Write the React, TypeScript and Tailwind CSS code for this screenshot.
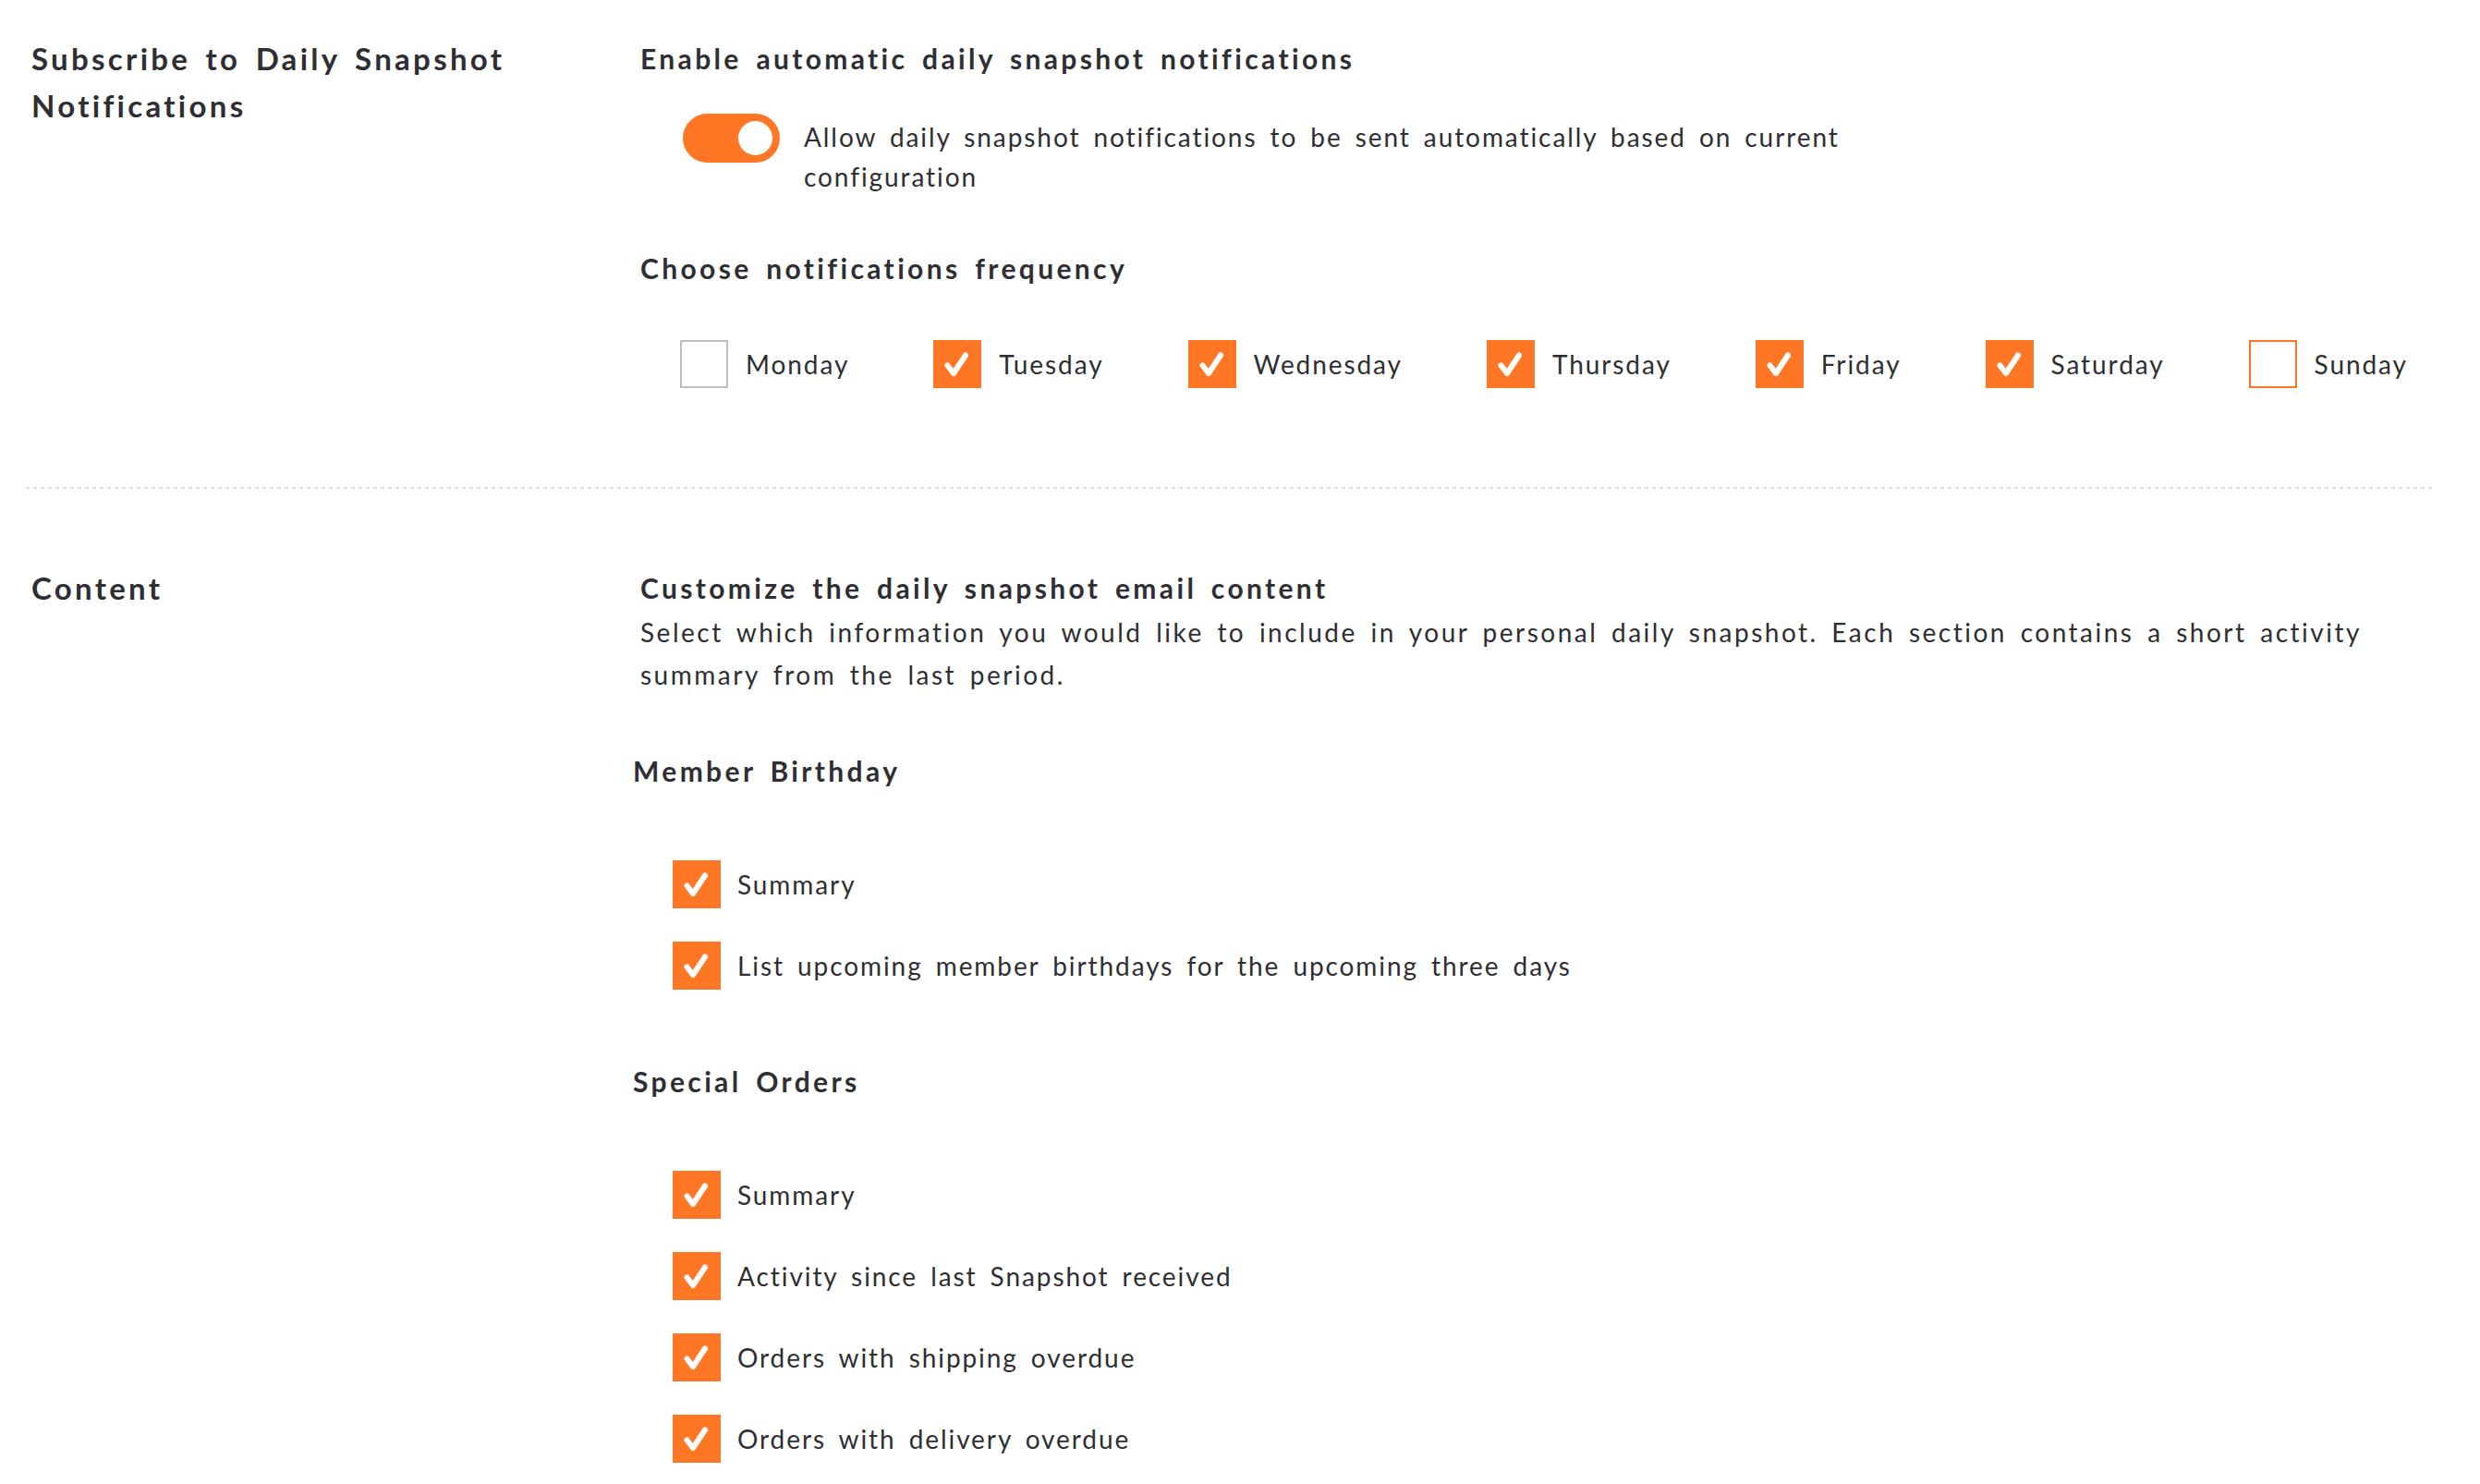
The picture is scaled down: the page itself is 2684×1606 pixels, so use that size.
import React, { useState } from 'react';

const days = [
  { name: 'Monday', checked: false },
  { name: 'Tuesday', checked: true },
  { name: 'Wednesday', checked: true },
  { name: 'Thursday', checked: true },
  { name: 'Friday', checked: true },
  { name: 'Saturday', checked: true },
  { name: 'Sunday', checked: false, focused: true },
];

const groups = [
  {
    title: 'Member Birthday',
    items: ['Summary', 'List upcoming member birthdays for the upcoming three days'],
  },
  {
    title: 'Special Orders',
    items: [
      'Summary',
      'Activity since last Snapshot received',
      'Orders with shipping overdue',
      'Orders with delivery overdue',
    ],
  },
];

const Check: React.FC = () => (
  <svg viewBox="0 0 52 52" className="w-[52px] h-[52px]">
    <path d="M15.5 27.5 L22 36 L35 16.5" fill="none" stroke="#fff" strokeWidth="6" strokeLinecap="round" strokeLinejoin="round" />
  </svg>
);

const Checkbox: React.FC<{ checked: boolean; focused?: boolean }> = ({ checked, focused }) => {
  if (checked) {
    return (
      <span className="w-[52px] h-[52px] shrink-0 bg-[#ff7725] flex items-center justify-center">
        <Check />
      </span>
    );
  }
  return (
    <span
      className={
        focused
          ? 'w-[52px] h-[52px] shrink-0 bg-white border-2 border-[#ff7725]'
          : 'w-[52px] h-[52px] shrink-0 bg-white border-2 border-[#bdbdbd]'
      }
    />
  );
};

const App: React.FC = () => {
  const [enabled, setEnabled] = useState(true);

  return (
    <div className="min-h-screen bg-white text-[#2e2e33] font-['Lato',sans-serif] tracking-[1.92px] [word-spacing:5px] pl-[28px] pr-[48px]">
      {/* subscribe */}
      <section className="flex pt-[38px] pb-[107px]">
        <div className="w-[665px] shrink-0 pl-[6px]">
          <h2 className="max-w-[580px] text-[33px] leading-[51px] font-bold tracking-[0.1em]">
            Subscribe to Daily Snapshot Notifications
          </h2>
        </div>
        <div className="flex-1">
          <h3 className="text-[30px] leading-[50px] font-bold tracking-[0.112em]">Enable automatic daily snapshot notifications</h3>
          <div className="flex items-start mt-[35px] pl-[46px]">
            <button
              onClick={() => setEnabled(!enabled)}
              className="w-[105px] h-[53px] shrink-0 rounded-full bg-[#ff7725] flex items-center justify-end pr-[8px]"
            >
              <span className="w-[37px] h-[37px] rounded-full bg-white" />
            </button>
            <p className="ml-[26px] mt-[4px] max-w-[1170px] text-[28px] leading-[43px]">
              Allow daily snapshot notifications to be sent automatically based on current configuration
            </p>
          </div>
          <h3 className="mt-[52px] text-[30px] leading-[50px] font-bold tracking-[0.112em]">Choose notifications frequency</h3>
          <div className="flex items-center mt-[53px] pl-[43px] gap-[91px]">
            {days.map((d) => (
              <label key={d.name} className="flex items-center gap-[19px]">
                <Checkbox checked={d.checked} focused={d.focused} />
                <span className="text-[28px] leading-[40px]">{d.name}</span>
              </label>
            ))}
          </div>
        </div>
      </section>

      <div className="h-[2px] bg-[repeating-linear-gradient(to_right,#dcdcdc_0,#dcdcdc_4px,transparent_4px,transparent_8px)]" />

      {/* content */}
      <section className="flex pt-[82px] pb-[22px]">
        <div className="w-[665px] shrink-0 pl-[6px]">
          <h2 className="text-[33px] leading-[51px] font-bold tracking-[0.1em]">Content</h2>
        </div>
        <div className="flex-1">
          <h3 className="text-[30px] leading-[50px] font-bold tracking-[0.112em]">Customize the daily snapshot email content</h3>
          <p className="text-[28px] leading-[46px] tracking-[2.5px]">
            Select which information you would like to include in your personal daily snapshot. Each section contains a short activity
            <br />
            summary from the last period.
          </p>
          {groups.map((g, gi) => (
            <div key={g.title} className={gi === 0 ? 'mt-[56px] -ml-[8px]' : 'mt-[74px] -ml-[8px]'}>
              <h4 className="text-[30px] leading-[50px] font-bold tracking-[0.112em]">{g.title}</h4>
              <div className="flex flex-col gap-[36px] mt-[72px] pl-[43px]">
                {g.items.map((it, i) => (
                  <label key={i} className="flex items-center gap-[18px]">
                    <Checkbox checked />
                    <span className="text-[28px] leading-[40px]">{it}</span>
                  </label>
                ))}
              </div>
            </div>
          ))}
        </div>
      </section>
    </div>
  );
};

export default App;
